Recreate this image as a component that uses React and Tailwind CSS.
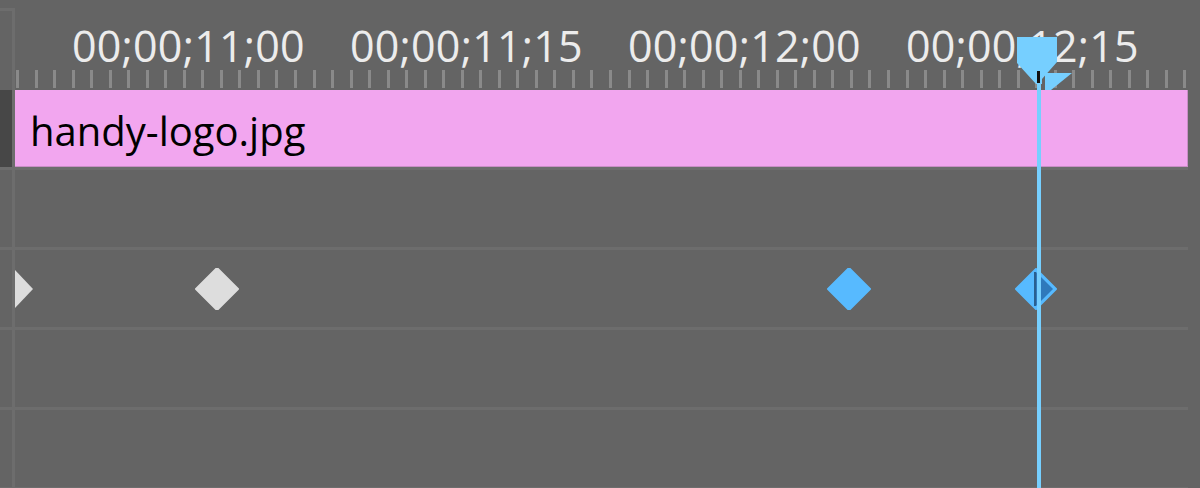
import React from 'react';

const labels = ['00;00;11;00', '00;00;11;15', '00;00;12;00', '00;00;12;15'];
const ticks = Array.from({ length: 64 }, (_, i) => i);

const Diamond = ({ cx, fill }) => (
  <polygon points={`${cx},0 ${cx + 21},21 ${cx},42 ${cx - 21},21`} fill={fill} strokeLinejoin="round" stroke={fill} strokeWidth="2" />
);

const Row = ({ children, contentClass = '', leftClass = 'bg-[#646464]' }) => (
  <div className="flex h-[80px]">
    <div className={`w-[12px] border-b-[3px] border-[#6d6d6d] ${leftClass}`} />
    <div className="w-[3px] bg-[#6d6d6d]" />
    <div className={`relative w-[1173px] border-b-[3px] border-[#6d6d6d] ${contentClass}`}>{children}</div>
    <div className="flex-1" />
  </div>
);

export default function App() {
  return (
    <div className="relative w-[1200px] h-[488px] overflow-hidden bg-[#646464]" style={{ fontFamily: '"Open Sans", sans-serif' }}>
      {/* ruler */}
      <div className="flex h-[90px]">
        <div className="w-[12px]">
          <div className="mt-[8px] h-[3px] bg-[#6d6d6d]" />
        </div>
        <div className="mt-[8px] w-[3px] bg-[#6d6d6d]" />
        <div className="w-[1173px] flex flex-col">
          <div className="flex pt-[24px] pl-[57px] h-[67px]">
            {labels.map((l) => (
              <div key={l} className="w-[278px] shrink-0 text-[43px] font-medium tracking-[0.2px] leading-none text-[#ececec] whitespace-nowrap">
                {l}
              </div>
            ))}
          </div>
          <div className="mt-[3px] h-[18px] flex justify-between px-[1px]">
            {ticks.map((t) => (
              <div key={t} className="w-[3px] h-full bg-[#8a8a8a]" />
            ))}
          </div>
        </div>
        <div className="flex-1" />
      </div>

      {/* clip track */}
      <Row leftClass="bg-[#474747]">
        <div className="h-[77px] bg-[#f2a6ef] border-b border-r border-[#c98ec6] pl-[15px] pt-[21px]">
          <span className="block text-[40px] leading-none text-black">handy-logo.jpg</span>
        </div>
      </Row>
      <Row />
      <Row>
        <svg className="absolute left-0 top-[18px]" width="1173" height="42" viewBox="0 0 1173 42">
          <polygon points="0,2 18,21 0,40" fill="#dddddd" />
          <Diamond cx={202} fill="#dddddd" />
          <Diamond cx={834} fill="#57baff" />
          <polygon points="1021,1 1041,21 1021,41 1001,21" fill="#57baff" stroke="#57baff" strokeWidth="2" strokeLinejoin="round" />
          <polygon points="1021,4 1038,21 1021,38" fill="#2f79bb" />
          <rect x="1019" y="4" width="2" height="34" fill="#2a5f8f" />
        </svg>
      </Row>
      <Row />
      <Row />

      {/* playhead */}
      <div className="absolute left-[1037px] top-[80px] w-[4px] h-[408px] bg-[#76cfff]" />
      <svg className="absolute left-0 top-0 pointer-events-none" width="1200" height="100" viewBox="0 0 1200 100">
        <path d="M1017 37 H1057 V62 L1042 79 V84 H1036 L1017 63 Z" fill="#76cfff" />
        <path d="M1045 73 H1072 L1051 90 H1045 Z" fill="#76cfff" />
        <rect x="1037" y="71" width="3" height="12" fill="#111111" />
      </svg>
    </div>
  );
}
